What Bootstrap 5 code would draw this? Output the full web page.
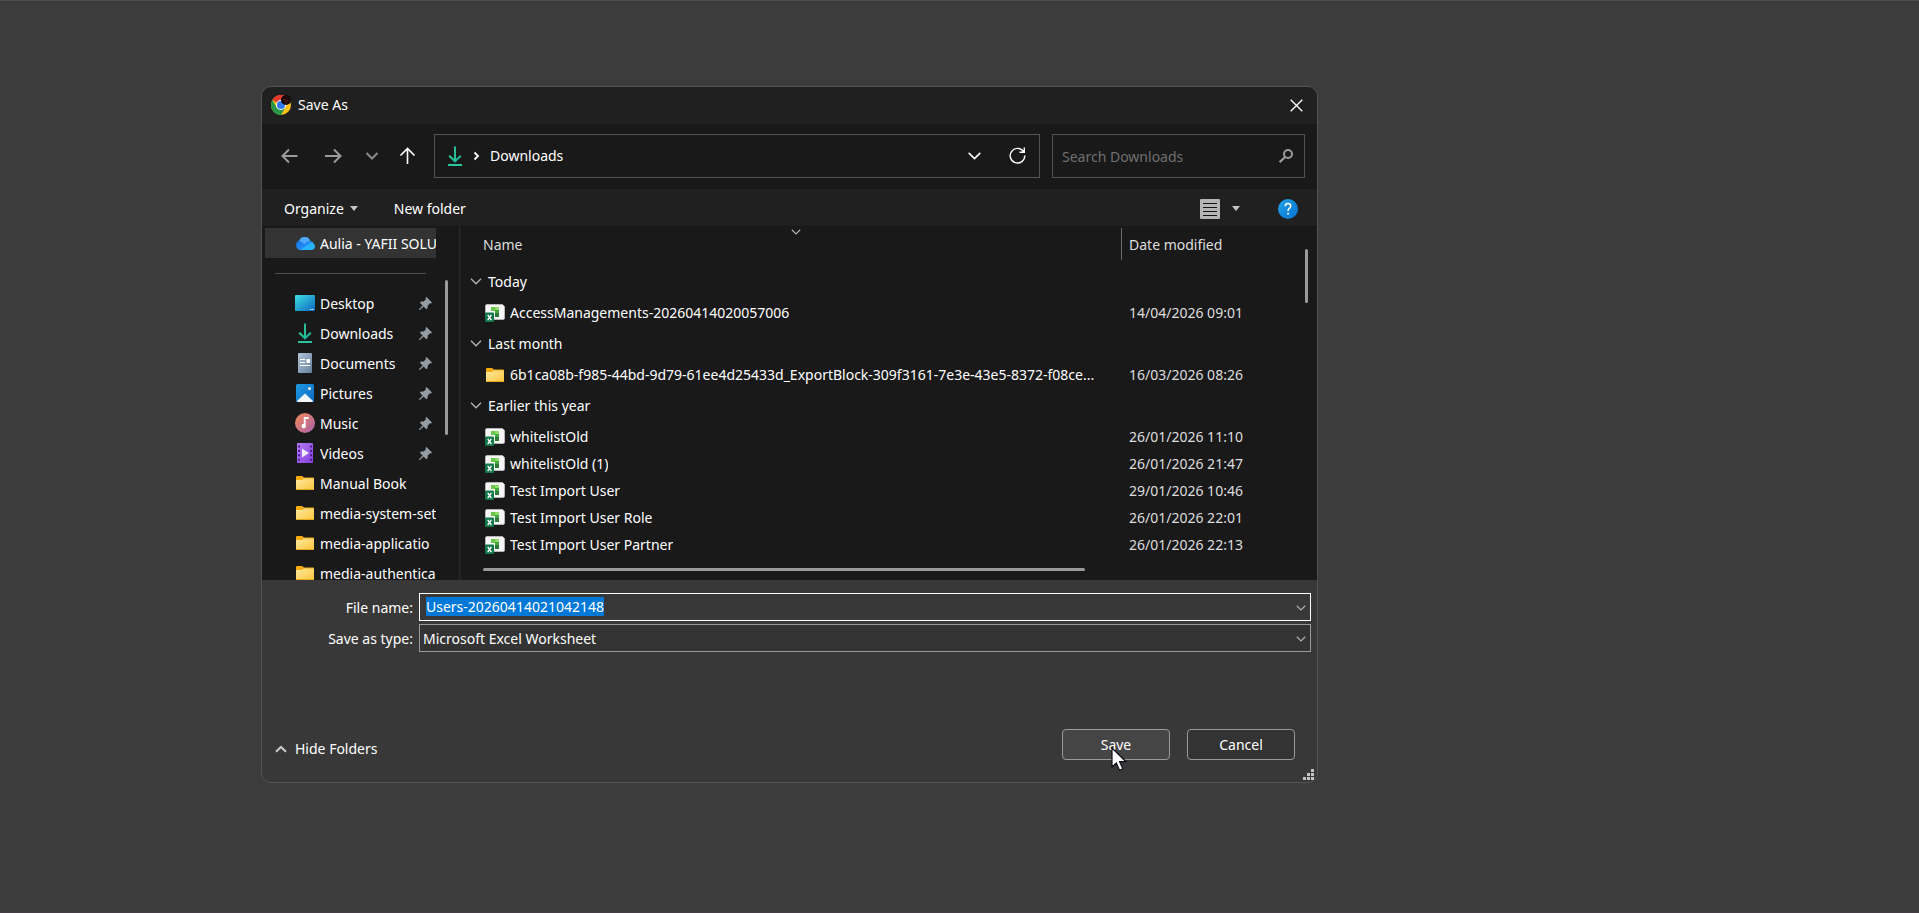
<!DOCTYPE html>
<html lang="en">
<head>
<meta charset="utf-8">
<meta name="viewport" content="width=device-width, initial-scale=1">
<title>Save As</title>
<link href="https://cdn.jsdelivr.net/npm/bootstrap@5.3.0/dist/css/bootstrap.min.css" rel="stylesheet">
<style>
  :root { --ink: #fff; --dim: #dedede; --edge: #535353; --pane: #191919; --bar: #202020; }
  body {
    background: #3c3c3c; color: var(--ink); min-height: 100vh;
    border-top: 1px solid #4a4a4a; border-bottom: 1px solid #443c41;
    font: 14px/20px "Noto Sans", "Open Sans", sans-serif;
  }
  svg { display: block; flex: none; }
  button, input, select { font: inherit; color: inherit; }
  .plain-btn { background: none; border: 0; padding: 0; color: inherit; display: flex; align-items: center; justify-content: center; }
  .stage { padding: 85px 16px 16px 261px; }
  .save-dialog { max-width: 1057px; border: 1px solid var(--edge); border-radius: 10px; background: #383838; overflow: hidden; position: relative; }
  .title-bar { background: var(--bar); height: 37px; padding: 0 14px 1px 9px; }
  .title-bar h1 { font-size: 14px; line-height: 20px; font-weight: 400; margin-left: 7px; }
  .nav-row { background: var(--pane); height: 65px; padding: 0 12px 2px 17px; }
  .nav-tools { width: 155px; }
  .nav-tools .plain-btn { height: 24px; }
  .path-box, .find-box { border: 1px solid var(--edge); height: 44px; }
  .path-box { padding: 0 13px; }
  .find-box { width: 253px; margin-left: 12px; padding: 0 11px 0 9px; }
  .find-box input { background: none; border: 0; outline: 0; padding: 2px 0 0; min-width: 0; }
  .find-box input::placeholder { color: #6f6f6f; opacity: 1; }
  .tool-row { background: var(--bar); height: 38px; padding: 2px 19px 0 22px; border-bottom: 1px solid #161616; }
  .drop-btn { gap: 6px; }
  .new-btn { margin-left: 36px; }
  .view-more { margin-left: 12px; }
  .help-btn { margin-left: 38px; }
  .browser-area { height: 353px; background: var(--pane); }
  .side-pane { width: 195px; padding-top: 1px; }
  .side-list { width: 171px; margin-left: 3px; overflow: hidden; height: 352px; }
  .side-list a { display: flex; align-items: center; height: 30px; padding-left: 30px; gap: 5px; color: inherit; text-decoration: none; white-space: nowrap; }
  .side-list a.current { background: #333; }
  .side-list .label { flex: 1; overflow: hidden; padding-top: 2px; }
  .side-list .ico { width: 20px; display: flex; justify-content: center; flex: none; }
  .side-list .pin { margin-right: 4px; }
  .side-rule { height: 30px; padding: 15px 10px 0; }
  .side-rule hr { margin: 0; border-color: #505050; opacity: 1; }
  .thumb { background: #9a9a9a; border-radius: 2px; }
  .side-thumb { width: 3px; height: 155px; margin: 52px 9px 0; }
  .splitter { width: 4px; background: #232323; border-left: 1px solid #111; }
  .file-table { width: 100%; table-layout: fixed; border-collapse: collapse; margin-top: 1px; }
  .file-table th, .file-table td { padding: 0; font-weight: 400; vertical-align: middle; }
  .file-table thead th { height: 36px; color: var(--dim); position: relative; padding-bottom: 2px; }
  .file-table thead th:first-child { padding-left: 22px; }
  .file-table .col-date { width: 175px; padding-left: 8px; color: var(--dim); }
  .file-table thead .col-date::before { content: ""; position: absolute; left: 0; top: 0; width: 1px; height: 32px; background: #6b6b6b; }
  .sort-mark { position: absolute; left: 50%; top: 1px; }
  .mark-dim, .sort-mark, .combo svg { color: #b4b4b4; }
  .group-head { height: 35px; padding-left: 9px; gap: 6px; }
  .file-cell { height: 27px; padding-left: 24px; gap: 5px; padding-right: 11px; }
  .across { padding: 10px 0 0 22px; }
  .across .thumb { width: 74%; height: 3px; }
  .down { width: 21px; }
  .down .thumb { width: 3px; height: 54px; margin: 22px 0 0 9px; }
  .form-area { padding: 13px 6px 0 0; }
  .form-area label { width: 151px; margin-right: 6px; text-align: right; padding-top: 1px; }
  .name-line { margin-bottom: 3px; }
  .combo { position: relative; height: 28px; }
  .combo input, .combo select { width: 100%; height: 28px; border: 1px solid #9a9a9a; border-radius: 0; background: #333; padding: 4px 24px 2px 3px; outline: 0; appearance: none; line-height: 20px; }
  .combo input { border-color: #fff; background: #383838; padding: 2px 24px 4px 6px; }
  .combo input::selection { background: #0078d7; color: #fff; }
  .combo svg { position: absolute; right: 5px; top: 12px; pointer-events: none; }
  .dialog-foot { padding: 77px 22px 22px 13px; }
  .foot-gap { gap: 17px; }
  .hide-btn { gap: 8px; padding-top: 8px; }
  .push { width: 108px; height: 31px; border: 1px solid #9a9a9a; border-radius: 4px; background: #333; padding: 0; }
  .push.hot { background: #454545; }
  .pointer { position: absolute; left: 49px; top: 18px; }
  .grip { position: absolute; right: 3px; bottom: 2px; }
</style>
</head>
<body>
<svg width="0" height="0" class="position-absolute" aria-hidden="true">
  <defs>
    <linearGradient id="gTeal" x1="0" y1="0" x2="1" y2="1"><stop offset="0" stop-color="#35d08c"/><stop offset="1" stop-color="#12a5a5"/></linearGradient>
    <linearGradient id="gDesk" x1="0" y1="0" x2="1" y2="1"><stop offset="0" stop-color="#3fe0e6"/><stop offset="1" stop-color="#0c66bd"/></linearGradient>
    <linearGradient id="gFold" x1="0" y1="0" x2="1" y2="1"><stop offset="0" stop-color="#ffe9a0"/><stop offset="1" stop-color="#fdc63c"/></linearGradient>
    <linearGradient id="gDoc" x1="0" y1="0" x2="1" y2="1"><stop offset="0" stop-color="#b4c4d6"/><stop offset="1" stop-color="#63809f"/></linearGradient>
    <linearGradient id="gPic" x1="0" y1="0" x2="1" y2="1"><stop offset="0" stop-color="#1f9be6"/><stop offset="1" stop-color="#0b68bd"/></linearGradient>
    <linearGradient id="gMus" x1="0" y1="0" x2="1" y2="1"><stop offset="0" stop-color="#f58b54"/><stop offset="1" stop-color="#a85fae"/></linearGradient>
    <linearGradient id="gVid" x1="0" y1="0" x2="1" y2="1"><stop offset="0" stop-color="#b67af5"/><stop offset="1" stop-color="#8340dd"/></linearGradient>
    <linearGradient id="gHelp" x1="0" y1="0" x2="1" y2="1"><stop offset="0" stop-color="#22a4ea"/><stop offset="1" stop-color="#0571cf"/></linearGradient>
    <linearGradient id="gCloud" x1="0" y1="0" x2="1" y2="1"><stop offset="0" stop-color="#1769e0"/><stop offset="1" stop-color="#25a4ff"/></linearGradient>
    <symbol id="i-down" viewBox="0 0 14 20"><path d="M1.200 9.700 7 15.300 12.800 9.700" fill="none" stroke="url(#gTeal)" stroke-width="2"/><path d="M6 .5h2v14.500H6z" fill="#27bd96"/><path d="M0 18h14v2H0z" fill="#2cc3a0"/></symbol>
    <symbol id="i-folder" viewBox="0 0 18 14"><path d="M0 1Q0 0 1 0h5l2 1.500h9q1 0 1 1V5H0z" fill="#f6ac11"/><path d="M0 4h6l2-1.500h9q1 0 1 1V13q0 1-1 1H1q-1 0-1-1z" fill="url(#gFold)"/><path d="M0 13h18q0 1-1 1H1q-1 0-1-1z" fill="#e9a91f"/></symbol>
    <symbol id="i-pin" viewBox="0 0 13 13"><path d="M7.500 0 13 5.500 12 6.500 11 6.200 8.800 8.400 8.500 11.200 7.300 12.300 4.600 9.500.9 12.900.1 13 .2 12.100 3.600 8.400.9 5.700 2 4.600 4.700 4.400 6.900 2.200 6.500 1z" fill="#949ca3"/></symbol>
    <symbol id="i-xls" viewBox="0 0 20 18"><path d="M.5 2Q.5.500 2 .500h15.500l2 2V14q0 1.500-1.500 1.500H2Q.5 15.500.5 14z" fill="#f6f6f6" stroke="#b5b5b5"/><path d="M6 3h8v3.500H6z" fill="#8fdd6c"/><path d="M6 3h4.300v4H6z" fill="#6cc64a"/><path d="M10 6h4v7h-4z" fill="#2d7a37"/><path d="M10 6h4v3h-4z" fill="#43a83f"/><rect y="8.500" width="9" height="9.500" rx="1" fill="#12784a"/><path d="m2.700 10.800 3.700 5.200M6.400 10.800 2.700 16" stroke="#fff" stroke-width="1.300"/></symbol>
    <symbol id="i-chev" viewBox="0 0 12 7"><path d="m1 .8 5 5 5-5" fill="none" stroke="currentColor" stroke-width="1.300"/></symbol>
  </defs>
</svg>

<main class="stage">
  <section class="save-dialog" role="dialog" aria-labelledby="dlgTitle">
    <header class="title-bar d-flex align-items-center">
      <svg width="20" height="20" viewBox="0 0 20 20"><circle cx="10" cy="10" r="10" fill="#fbc116"/><path d="M10 10 1.300 5A10 10 0 0 1 18.700 5H10z" fill="#e33b2e"/><path d="M1.300 5A10 10 0 0 0 10 20l4.300-7.500L10 10 5.700 12.500z" fill="#27984a"/><circle cx="10" cy="10" r="5" fill="#fff"/><circle cx="10" cy="10" r="4" fill="#2f78ec"/><circle cx="15" cy="5" r="5" fill="#150b0c"/><path d="M12.500 4.500h2M15.500 5.500h2M14 7h2" stroke="#862020"/></svg>
      <h1 id="dlgTitle" class="mb-0 flex-grow-1">Save As</h1>
      <button class="plain-btn" aria-label="Close"><svg width="13" height="13" viewBox="0 0 13 13"><path d="m.7.7 11.600 11.600M12.300.7.7 12.300" stroke="#fff" stroke-width="1.300"/></svg></button>
    </header>

    <div class="nav-row d-flex align-items-center">
      <div class="nav-tools d-flex align-items-center">
        <button class="plain-btn" aria-label="Back"><svg width="22" height="20" viewBox="0 0 22 20"><path d="M18.500 10H4M10 3.500 3.500 10l6.500 6.500" fill="none" stroke="#9b9b9b" stroke-width="2"/></svg></button>
        <button class="plain-btn ms-4" aria-label="Forward"><svg width="20" height="20" viewBox="0 0 20 20"><path d="M0 10h15.500M9 3.500 15.500 10 9 16.500" fill="none" stroke="#9b9b9b" stroke-width="2"/></svg></button>
        <button class="plain-btn ms-3" aria-label="Recent locations"><svg width="20" height="20" viewBox="0 0 20 20"><path d="m5.500 7 5.500 5.500L16.500 7" fill="none" stroke="#8a8a8a" stroke-width="2"/></svg></button>
        <button class="plain-btn ms-3" aria-label="Up"><svg width="20" height="20" viewBox="0 0 20 20"><path d="M10.500 18V3M3.500 9.500l7-7 7 7" fill="none" stroke="#fff" stroke-width="1.600"/></svg></button>
      </div>
      <div class="path-box d-flex align-items-center flex-grow-1">
        <svg width="14" height="20"><use href="#i-down"/></svg>
        <svg class="ms-2 me-2" width="12" height="10" viewBox="0 0 12 10"><path d="m4.500 1.500 3.500 3.500-3.500 3.500" fill="none" stroke="#fff" stroke-width="1.800"/></svg>
        <span class="flex-grow-1">Downloads</span>
        <button class="plain-btn" aria-label="Previous locations"><svg width="13" height="8" viewBox="0 0 13 8"><path d="m.7.9 5.800 5.700L12.300.9" fill="none" stroke="#fff" stroke-width="1.500"/></svg></button>
        <button class="plain-btn ms-4" aria-label="Refresh"><svg class="ms-1" width="17" height="17" viewBox="0 0 17 17"><path d="M14.800 5A7.300 7.300 0 1 0 15.800 8.500M15.300.5v4.800h-4.800" fill="none" stroke="#fff" stroke-width="1.400"/></svg></button>
      </div>
      <div class="find-box d-flex align-items-center">
        <input class="flex-grow-1" type="search" placeholder="Search Downloads" aria-label="Search Downloads">
        <svg width="14" height="14" viewBox="0 0 14 14"><circle cx="9" cy="5" r="4" fill="none" stroke="#9b9b9b" stroke-width="2"/><path d="M6 8 .7 13.200" stroke="#9b9b9b" stroke-width="2.200"/></svg>
      </div>
    </div>

    <div class="tool-row d-flex align-items-center">
      <button class="plain-btn drop-btn">Organize<svg width="8" height="5"><path d="M0 0h8L4 5z" fill="#c4c4c4"/></svg></button>
      <button class="plain-btn new-btn">New folder</button>
      <button class="plain-btn ms-auto" aria-label="Change your view"><svg width="20" height="20"><rect width="20" height="20" rx="1" fill="#b5b5b5"/><path d="M3 4.500h14M3 8.500h14M3 12.500h14M3 16.500h14" stroke="#151515"/></svg></button>
      <button class="plain-btn view-more" aria-label="More view options"><svg width="8" height="5"><path d="M0 0h8L4 5z" fill="#c4c4c4"/></svg></button>
      <button class="plain-btn help-btn" aria-label="Help"><svg width="20" height="20"><circle cx="10" cy="10" r="10" fill="url(#gHelp)"/><path d="M7.300 7.200Q7.300 4.600 10 4.600t2.700 2.400q0 1.400-1.400 2.300T10 12" fill="none" stroke="#fff" stroke-width="1.500"/><path d="M9.200 13.700h1.700v1.700H9.200z" fill="#fff"/></svg></button>
    </div>

    <div class="browser-area d-flex overflow-hidden">
      <div class="side-pane d-flex flex-shrink-0">
        <nav class="side-list" aria-label="Folders">
          <a class="current" href="#"><span class="ico"><svg width="20" height="14" viewBox="0 0 20 14"><path d="M5 14a5 5 0 0 1-.8-9.500A6 6 0 0 1 15.300 5 4.600 4.600 0 0 1 15.500 14z" fill="url(#gCloud)"/><path d="M4.200 4.500A6 6 0 0 1 15.300 5Q12 5 9.500 8L5 5z" fill="#4fa8fb"/><path d="M5 14 16 6.500q4 1 4 3.700 0 3.800-4.500 3.800z" fill="#27b4ff"/></svg></span><span class="label">Aulia - YAFII SOLU</span></a>
          <div class="side-rule"><hr></div>
          <a href="#"><span class="ico"><svg width="20" height="16"><rect width="20" height="16" rx="1" fill="url(#gDesk)"/><path d="M15 14.500h1.500M17 14.500h1.500" stroke="#cdeaff"/></svg></span><span class="label">Desktop</span><svg class="pin" width="13" height="13"><use href="#i-pin"/></svg></a>
          <a href="#"><span class="ico"><svg width="14" height="20"><use href="#i-down"/></svg></span><span class="label">Downloads</span><svg class="pin" width="13" height="13"><use href="#i-pin"/></svg></a>
          <a href="#"><span class="ico"><svg width="14" height="20"><rect width="14" height="20" rx="1" fill="url(#gDoc)"/><path d="M2 6.500h5M2 9.500h5M2 12.500h10" stroke="#fff" stroke-width="1.200"/><path d="M8.500 6H12v4H8.500z" fill="#fff"/></svg></span><span class="label">Documents</span><svg class="pin" width="13" height="13"><use href="#i-pin"/></svg></a>
          <a href="#"><span class="ico"><svg width="18" height="18"><rect width="18" height="18" rx="1.500" fill="url(#gPic)"/><path d="M1 17 9 9.500 17 17q0 1-1 1H2q-1 0-1-1z" fill="#f3f8fc"/><circle cx="13.500" cy="4.500" r="1.500" fill="#fff"/></svg></span><span class="label">Pictures</span><svg class="pin" width="13" height="13"><use href="#i-pin"/></svg></a>
          <a href="#"><span class="ico"><svg width="20" height="20"><circle cx="10" cy="10" r="10" fill="url(#gMus)"/><path d="M9.700 4v9M9.700 5h4" stroke="#fff" stroke-width="1.800"/><circle cx="8.700" cy="13" r="2.200" fill="#fff"/></svg></span><span class="label">Music</span><svg class="pin" width="13" height="13"><use href="#i-pin"/></svg></a>
          <a href="#"><span class="ico"><svg width="16" height="20"><rect width="16" height="20" rx="1" fill="url(#gVid)"/><path d="M2 2.500v16M14 2.500v16" stroke="#4a1f8c" stroke-width="2" stroke-dasharray="2 2.400"/><path d="m5 5.500 7 4.500-7 4.500z" fill="#f2ecfb"/></svg></span><span class="label">Videos</span><svg class="pin" width="13" height="13"><use href="#i-pin"/></svg></a>
          <a href="#"><span class="ico"><svg width="18" height="14"><use href="#i-folder"/></svg></span><span class="label">Manual Book</span></a>
          <a href="#"><span class="ico"><svg width="18" height="14"><use href="#i-folder"/></svg></span><span class="label">media-system-set</span></a>
          <a href="#"><span class="ico"><svg width="18" height="14"><use href="#i-folder"/></svg></span><span class="label">media-applicatio</span></a>
          <a href="#"><span class="ico"><svg width="18" height="14"><use href="#i-folder"/></svg></span><span class="label">media-authentica</span></a>
        </nav>
        <div class="thumb side-thumb"></div>
      </div>
      <div class="splitter flex-shrink-0"></div>
      <div class="flex-grow-1 overflow-hidden">
        <table class="file-table">
          <thead>
            <tr><th scope="col">Name<svg class="sort-mark" width="10" height="6"><use href="#i-chev"/></svg></th><th scope="col" class="col-date">Date modified</th></tr>
          </thead>
          <tbody>
            <tr><th colspan="2" scope="rowgroup"><div class="group-head d-flex align-items-center"><svg class="mark-dim" width="12" height="7"><use href="#i-chev"/></svg>Today</div></th></tr>
            <tr><td><div class="file-cell d-flex align-items-center"><svg width="20" height="18"><use href="#i-xls"/></svg><span class="text-truncate">AccessManagements-20260414020057006</span></div></td><td class="col-date">14/04/2026 09:01</td></tr>
          </tbody>
          <tbody>
            <tr><th colspan="2" scope="rowgroup"><div class="group-head d-flex align-items-center"><svg class="mark-dim" width="12" height="7"><use href="#i-chev"/></svg>Last month</div></th></tr>
            <tr><td><div class="file-cell d-flex align-items-center"><svg width="20" height="14"><use href="#i-folder"/></svg><span class="text-truncate">6b1ca08b-f985-44bd-9d79-61ee4d25433d_ExportBlock-309f3161-7e3e-43e5-8372-f08ce...</span></div></td><td class="col-date">16/03/2026 08:26</td></tr>
          </tbody>
          <tbody>
            <tr><th colspan="2" scope="rowgroup"><div class="group-head d-flex align-items-center"><svg class="mark-dim" width="12" height="7"><use href="#i-chev"/></svg>Earlier this year</div></th></tr>
            <tr><td><div class="file-cell d-flex align-items-center"><svg width="20" height="18"><use href="#i-xls"/></svg><span class="text-truncate">whitelistOld</span></div></td><td class="col-date">26/01/2026 11:10</td></tr>
            <tr><td><div class="file-cell d-flex align-items-center"><svg width="20" height="18"><use href="#i-xls"/></svg><span class="text-truncate">whitelistOld (1)</span></div></td><td class="col-date">26/01/2026 21:47</td></tr>
            <tr><td><div class="file-cell d-flex align-items-center"><svg width="20" height="18"><use href="#i-xls"/></svg><span class="text-truncate">Test Import User</span></div></td><td class="col-date">29/01/2026 10:46</td></tr>
            <tr><td><div class="file-cell d-flex align-items-center"><svg width="20" height="18"><use href="#i-xls"/></svg><span class="text-truncate">Test Import User Role</span></div></td><td class="col-date">26/01/2026 22:01</td></tr>
            <tr><td><div class="file-cell d-flex align-items-center"><svg width="20" height="18"><use href="#i-xls"/></svg><span class="text-truncate">Test Import User Partner</span></div></td><td class="col-date">26/01/2026 22:13</td></tr>
          </tbody>
        </table>
        <div class="across"><div class="thumb"></div></div>
      </div>
      <div class="down flex-shrink-0"><div class="thumb"></div></div>
    </div>

    <form onsubmit="return false">
      <div class="form-area">
        <div class="d-flex align-items-center name-line">
          <label for="fileName">File name:</label>
          <div class="combo flex-grow-1"><input id="fileName" type="text" value="Users-20260414021042148" autocomplete="off" spellcheck="false" autofocus><svg width="10" height="6"><use href="#i-chev"/></svg></div>
        </div>
        <div class="d-flex align-items-center">
          <label for="fileType">Save as type:</label>
          <div class="combo flex-grow-1"><select id="fileType"><option>Microsoft Excel Worksheet</option></select><svg width="10" height="6"><use href="#i-chev"/></svg></div>
        </div>
      </div>
      <div class="dialog-foot d-flex align-items-center">
        <button type="button" class="plain-btn hide-btn"><svg width="12" height="8" viewBox="0 0 12 8"><path d="M1 6.800 6 2l5 4.800" fill="none" stroke="#c8c8c8" stroke-width="2.200"/></svg>Hide Folders</button>
        <div class="d-flex ms-auto foot-gap">
          <div class="position-relative">
            <button type="submit" class="push hot">Save</button>
            <svg class="pointer" width="16" height="25" viewBox="0 0 16 25"><path d="M1 1v19l4.300-4 3.200 7.200 3.300-1.500-3.200-7H15z" fill="#fff" stroke="#10101c" stroke-width="1.200"/></svg>
          </div>
          <button type="button" class="push">Cancel</button>
        </div>
      </div>
    </form>
    <svg class="grip" width="11" height="11"><path d="M8 0h3v3H8zM4 4h3v3H4zM8 4h3v3H8zM0 8h3v3H0zM4 8h3v3H4zM8 8h3v3H8z" fill="#c4c4c4"/></svg>
  </section>
</main>
<script src="https://cdn.jsdelivr.net/npm/bootstrap@5.3.0/dist/js/bootstrap.bundle.min.js"></script>
<script>
  const fileName = document.getElementById('fileName');
  fileName.focus();
  fileName.select();
</script>
</body>
</html>
